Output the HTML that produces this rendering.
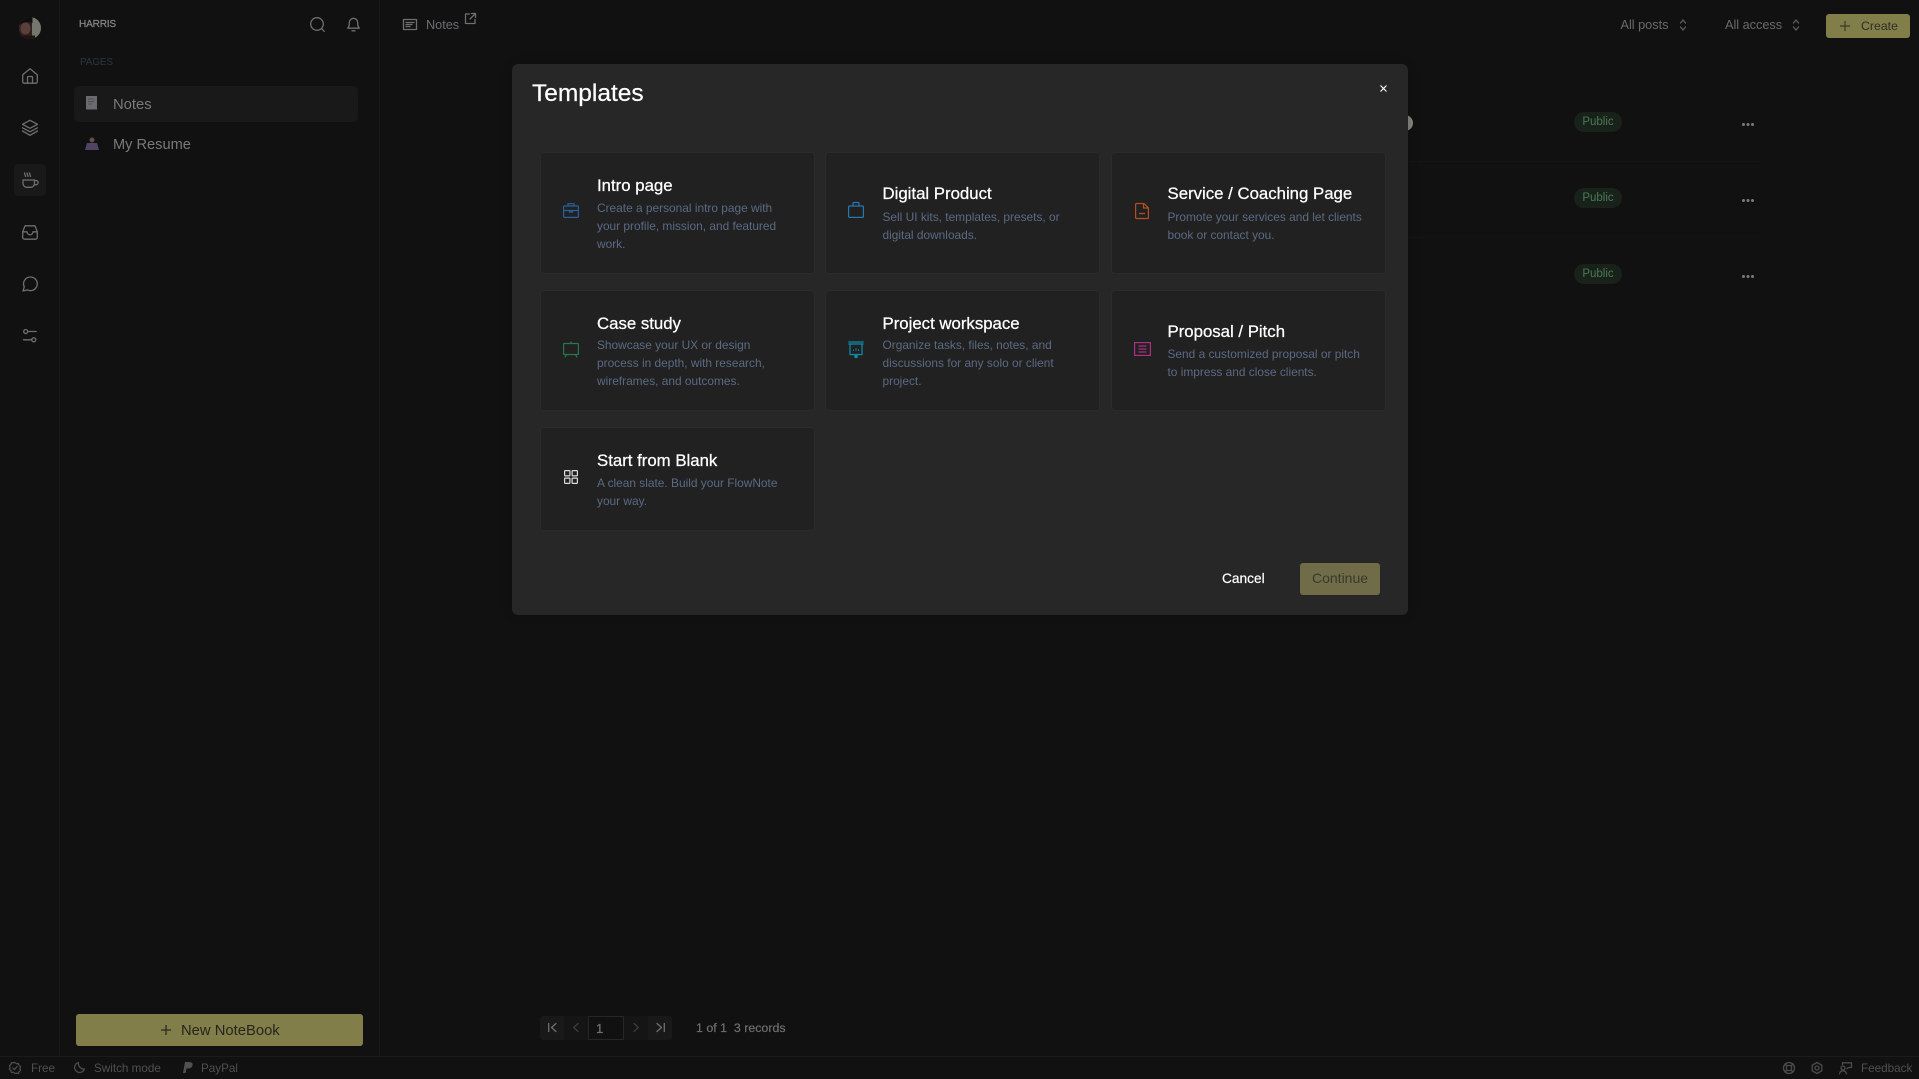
<!DOCTYPE html>
<html><head><meta charset="utf-8"><title>Templates</title>
<style>
*{box-sizing:border-box}
html,body{margin:0;padding:0;width:1919px;height:1079px;overflow:hidden;background:#111111;font-family:"Liberation Sans",sans-serif}
.a{position:absolute}
.t{position:absolute;white-space:nowrap;line-height:18px;height:18px}
svg{position:absolute;fill:none;overflow:visible}
.i{stroke:#6f6f6f;stroke-width:1.3;stroke-linecap:round;stroke-linejoin:round}
.card{position:absolute;background:#212121;border:1px solid #2b2b2b;border-radius:4px}
.h{color:#fff;font-size:16.8px;-webkit-text-stroke:.25px #fff}
.d{color:#5b6a84;font-size:11.9px}
.pub{position:absolute;left:1574px;width:48px;height:20px;border-radius:10px;background:#19211b;color:#4a7a55;font-size:11.5px;line-height:20px;text-align:center}
.dots{position:absolute;left:1742px;width:12px;height:3px;background:radial-gradient(circle at 1.5px 1.5px,#777 1.4px,transparent 1.6px) 0 0/4.5px 3px repeat-x}
.f{color:#505050;font-size:11.7px}
</style></head><body>

<div class="a" style="left:59px;top:0;width:1px;height:1056px;background:#191919"></div>
<div class="a" style="left:379px;top:0;width:1px;height:1056px;background:#191919"></div>
<div class="a" style="left:0;top:1056px;width:1919px;height:1px;background:#1b1b1b"></div>

<!-- avatar -->
<svg style="left:19px;top:17px" width="22" height="22" viewBox="0 0 22 22">
<defs><clipPath id="av"><circle cx="11" cy="11" r="11"/></clipPath></defs>
<g clip-path="url(#av)"><rect width="22" height="22" fill="#75776f"/><rect width="13" height="22" fill="#2e2220"/><ellipse cx="6.500" cy="11.500" rx="5" ry="6" fill="#5b3f39"/><path d="M0 0h13.500v6C9 4 4 5 0 8z" fill="#0f0f0f"/><path d="M0 18.500h16V22H0z" fill="#241210"/></g></svg>

<!-- rail -->
<div class="a" style="left:14px;top:164px;width:32px;height:32px;border-radius:4px;background:#191919"></div>
<svg class="i" style="left:22px;top:68px" width="16" height="16" viewBox="0 0 16 16"><path d="M.7 6.800 8 .8l7.300 6v7a1.400 1.400 0 0 1-1.400 1.400H2.100A1.400 1.400 0 0 1 .7 13.800z"/><path d="M5.500 15.200V9.500a1 1 0 0 1 1-1h3a1 1 0 0 1 1 1v5.700"/></svg>
<svg class="i" style="left:22px;top:120px" width="16" height="16" viewBox="0 0 16 16"><path d="M8 .3.5 4.300 8 8.300l7.500-4z"/><path d="M.5 7.800 8 11.800l7.500-4M.5 11 8 15.300l7.500-4.300"/></svg>
<svg class="i" style="left:22px;top:172px" width="17" height="16" viewBox="0 0 17 16" stroke-width="1.100"><path d="M1 8h11.500v3.500A3.800 3.800 0 0 1 8.700 15.300H4.800A3.800 3.800 0 0 1 1 11.500z"/><path d="M12.500 8.500h1.500a2 2 0 0 1 0 4.200h-1.600M2.500 1l1 3.500M5 1l1 3.500M7.500 1l1 3.500"/></svg>
<svg class="i" style="left:22px;top:225px" width="16" height="15" viewBox="0 0 16 15"><path d="M3 .8h10l2.300 6v5.500a1.900 1.900 0 0 1-1.900 1.900H2.600a1.900 1.900 0 0 1-1.900-1.900V6.800z"/><path d="M.8 6.800h4.200a3 3 0 0 0 6 0h4.200"/></svg>
<svg class="i" style="left:22px;top:276px" width="16" height="16" viewBox="0 0 16 16"><path d="M8.500 1a6.800 6.800 0 0 1 0 13.600 7 7 0 0 1-3-.7L1 15l1.300-4.100A6.800 6.800 0 0 1 8.500 1z"/></svg>
<svg class="i" style="left:23px;top:329px" width="14" height="14" viewBox="0 0 14 14"><circle cx="2.700" cy="2.500" r="2"/><circle cx="10.800" cy="10.800" r="2"/><path d="M4.700 2.500h8.500M.5 10.800h8.300"/></svg>

<!-- sidebar -->
<span class="t" style="left:79px;top:16px;color:#8a8a8a;font-size:10.100px;-webkit-text-stroke:.2px #8a8a8a;letter-spacing:-.2px">HARRIS</span>
<svg class="i" style="left:310px;top:17px" width="15" height="15" viewBox="0 0 15 15" stroke-width="1.100"><circle cx="7" cy="7" r="6.300"/><path d="m11.600 11.700 2.700 2.700"/></svg>
<svg class="i" style="left:347px;top:17px" width="13" height="15" viewBox="0 0 13 15" stroke-width="1.100"><path d="M.7 11.200h11.600c-1-1-1.600-2-1.600-4.200V5.500a4.200 4.200 0 0 0-8.400 0V7c0 2.200-.6 3.200-1.600 4.200zM5 13.800h3"/></svg>
<span class="t" style="left:80px;top:54px;color:#2c3442;font-size:9.800px">PAGES</span>
<div class="a" style="left:74px;top:86px;width:284px;height:36px;border-radius:4px;background:#191919"></div>
<svg style="left:86px;top:96px" width="12" height="14" viewBox="0 0 12 14"><path d="M0 0h11v13.500H0z" fill="#6b6a6e"/><path d="M2 3h6M2 5.500h6M2 8h4" stroke="#4f4e53"/></svg>
<span class="t" style="left:113px;top:96px;color:#7a7a7a;font-size:14.800px">Notes</span>
<svg style="left:85px;top:137px" width="14" height="13" viewBox="0 0 14 13"><circle cx="7" cy="3" r="2.500" fill="#5f5048"/><path d="M2 6h10l2 7H0z" fill="#4f4562"/></svg>
<span class="t" style="left:113px;top:136px;color:#7a7a7a;font-size:14.600px">My Resume</span>
<div class="a" style="left:76px;top:1014px;width:287px;height:32px;border-radius:3px;background:#827e49"></div>
<svg style="left:161px;top:1025px;stroke:#2a2a22;stroke-width:1.300" width="10" height="10" viewBox="0 0 10 10"><path d="M5 0v10M0 5h10"/></svg>
<span class="t" style="left:181px;top:1022px;color:#25251e;font-size:14.800px">New NoteBook</span>

<!-- top bar -->
<svg class="i" style="left:403px;top:19px" width="14" height="11" viewBox="0 0 14 11" stroke-width="1" stroke-linecap="butt" stroke-linejoin="miter"><rect x=".5" y=".5" width="13" height="10"/><path d="M3 3.500h8M3 5.500h6M3 7.500h4"/></svg>
<span class="t" style="left:426px;top:16px;color:#6a6c74;font-size:12.700px">Notes</span>
<svg class="i" style="left:465px;top:13px" width="11" height="11" viewBox="0 0 11 11" stroke-width="1" stroke-linecap="butt" stroke-linejoin="miter"><path d="M4.500 1H.5v9.500H10V6.500M6.500.5H10.500V4.500M10.300.7 5 6"/></svg>

<span class="t" style="left:1620.500px;top:16px;color:#6a6a6a;font-size:12.700px">All posts</span>
<svg class="i" style="left:1680px;top:19px;stroke:#5f5f5f" width="6" height="12" viewBox="0 0 6 12" stroke-width="1"><path d="M.5 4 3 1l2.500 3M.5 8 3 11l2.500-3"/></svg>
<span class="t" style="left:1725px;top:16px;color:#6a6a6a;font-size:12.700px">All access</span>
<svg class="i" style="left:1793px;top:19px;stroke:#5f5f5f" width="6" height="12" viewBox="0 0 6 12" stroke-width="1"><path d="M.5 4 3 1l2.500 3M.5 8 3 11l2.500-3"/></svg>
<div class="a" style="left:1826px;top:14px;width:84px;height:24px;border-radius:3px;background:#827e49"></div>
<svg style="left:1840px;top:21px;stroke:#3a3a2c;stroke-width:1.200" width="10" height="10" viewBox="0 0 10 10"><path d="M5 0v10M0 5h10"/></svg>
<span class="t" style="left:1861px;top:17px;color:#2e2e26;font-size:12.300px">Create</span>

<!-- list background -->
<div class="pub" style="top:112px">Public</div>
<div class="pub" style="top:188px">Public</div>
<div class="pub" style="top:264px">Public</div>
<div class="dots" style="top:122.500px"></div>
<div class="dots" style="top:198.500px"></div>
<div class="dots" style="top:274.500px"></div>
<div class="a" style="left:1408px;top:161px;width:352px;height:1px;background:#141414"></div>
<div class="a" style="left:1408px;top:237px;width:352px;height:1px;background:#141414"></div>
<div class="a" style="left:1397px;top:115px;width:16px;height:16px;border-radius:50%;background:#85857d"></div>

<!-- pagination -->
<div class="a" style="left:540px;top:1016px;width:24px;height:24px;background:#191919;border-radius:3px 0 0 3px"></div>
<div class="a" style="left:564px;top:1016px;width:24px;height:24px;background:#151515"></div>
<div class="a" style="left:588px;top:1016px;width:36px;height:24px;border:1px solid #262626"></div>
<div class="a" style="left:624px;top:1016px;width:24px;height:24px;background:#151515"></div>
<div class="a" style="left:648px;top:1016px;width:24px;height:24px;background:#191919;border-radius:0 3px 3px 0"></div>
<svg class="i" style="left:548px;top:1023px" width="9" height="9" viewBox="0 0 9 9" stroke-width="1.100"><path d="M.7.5v8M8 .5 3.500 4.500 8 8.500"/></svg>
<svg class="i" style="left:573px;top:1023px;stroke:#3c3c3c" width="6" height="9" viewBox="0 0 6 9" stroke-width="1.100"><path d="M5 .5.800 4.500 5 8.500"/></svg>
<span class="t" style="left:596px;top:1020px;color:#6f6f6f;font-size:13px;-webkit-text-stroke:.3px #6f6f6f">1</span>
<svg class="i" style="left:633px;top:1023px;stroke:#3c3c3c" width="6" height="9" viewBox="0 0 6 9" stroke-width="1.100"><path d="M1 .5l4.200 4L1 8.500"/></svg>
<svg class="i" style="left:656px;top:1023px" width="9" height="9" viewBox="0 0 9 9" stroke-width="1.100"><path d="M8.300.5v8M1 .5l4.500 4L1 8.500"/></svg>
<span class="t" style="left:696px;top:1019px;color:#6f6f6f;font-size:12.400px;-webkit-text-stroke:.2px #6f6f6f">1 of 1&nbsp; 3 records</span>

<!-- footer -->
<svg class="i" style="left:9px;top:1062px;stroke:#4c4c4c" width="12" height="12" viewBox="0 0 12 12" stroke-width="1"><path d="M6 .5 7.500 1.700 9.500 1.600l.6 1.900 1.500 1.200L11 6.500l.6 1.800-1.500 1.200-.6 1.900-2-.1L6 11.500 4.500 10.300l-2 .1-.6-1.900L.4 7.300 1 5.500.4 3.700 1.900 2.500l.6-1.900 2 .1z"/><path d="m3.800 6 1.600 1.600 2.800-3"/></svg>
<span class="t f" style="left:31px;top:1059.500px">Free</span>
<svg class="i" style="left:74px;top:1062px;stroke:#4c4c4c" width="11" height="11" viewBox="0 0 11 11" stroke-width="1.100"><path d="M4.500.6A5 5 0 1 0 10.400 7 5.500 5.500 0 0 1 4.500.6z"/></svg>
<span class="t f" style="left:94px;top:1059.500px">Switch mode</span>
<svg style="left:183px;top:1062px" width="10" height="12" viewBox="0 0 10 12"><path d="M2 0h4c3 0 4 1.500 3.500 3.500S7 6.500 5 6.500H3.500L2.600 11H0z" fill="#505050"/></svg>
<span class="t f" style="left:201px;top:1059.500px">PayPal</span>
<svg class="i" style="left:1783px;top:1062px;stroke:#4c4c4c" width="12" height="12" viewBox="0 0 12 12" stroke-width="1"><circle cx="6" cy="6" r="5.500"/><rect x="3.500" y="3.500" width="5" height="5" rx="1"/><path d="M2 2l1.500 1.500M10 2 8.500 3.500M2 10l1.500-1.500M10 10 8.500 8.500"/></svg>
<svg class="i" style="left:1811px;top:1062px;stroke:#4c4c4c" width="12" height="12" viewBox="0 0 12 12" stroke-width="1"><path d="M6 .5l4.800 2.700v5.600L6 11.500 1.200 8.800V3.200z"/><circle cx="6" cy="6" r="2"/></svg>
<svg class="i" style="left:1839px;top:1062px;stroke:#4c4c4c" width="13" height="12" viewBox="0 0 13 12" stroke-width="1"><circle cx="4" cy="6" r="2"/><path d="M.5 11.800c.4-2 1.800-3 3.500-3s3 1 3.500 3M3.500 2.500V.8h9v4.700H9.500l-1.500 1.200"/></svg>
<span class="t f" style="left:1861px;top:1059.500px">Feedback</span>

<!-- modal -->
<div class="a" style="left:512px;top:64px;width:896px;height:551px;background:#272727;border-radius:6px;box-shadow:0 0 10px rgba(0,0,0,.2)"></div>
<span class="t" style="left:532px;top:85px;color:#fff;font-size:24.500px;-webkit-text-stroke:.2px #fff">Templates</span>
<svg style="left:1380px;top:85px;stroke:#fff;stroke-width:1.200" width="7" height="7" viewBox="0 0 7 7"><path d="M.5.500l6 6M6.500.500l-6 6"/></svg>

<div class="card" style="left:540px;top:152px;width:275px;height:122px"></div>
<div class="card" style="left:825px;top:152px;width:275px;height:122px"></div>
<div class="card" style="left:1111px;top:152px;width:275px;height:122px"></div>
<div class="card" style="left:540px;top:290px;width:275px;height:121px"></div>
<div class="card" style="left:825px;top:290px;width:275px;height:121px"></div>
<div class="card" style="left:1111px;top:290px;width:275px;height:121px"></div>
<div class="card" style="left:540px;top:427px;width:275px;height:104px"></div>

<!-- card 1 -->
<svg style="left:563px;top:203px;stroke:#2a5f9f;stroke-width:1.200" width="16" height="15" viewBox="0 0 16 15"><rect x=".6" y="3" width="14.800" height="11.400" rx="1"/><path d="M5 3V.7h6V3M.6 7.500h14.800M6.500 7.500h3v1.500h-3z"/></svg>
<span class="t h" style="left:597px;top:177px">Intro page</span>
<span class="t d" style="left:597px;top:199px">Create a personal intro page with</span>
<span class="t d" style="left:597px;top:217px">your profile, mission, and featured</span>
<span class="t d" style="left:597px;top:235px">work.</span>
<!-- card 2 -->
<svg style="left:848px;top:202px;stroke:#2777ae;stroke-width:1.200" width="16" height="16" viewBox="0 0 16 16"><rect x=".6" y="4" width="14.800" height="11.400" rx="1"/><path d="M5 4V1.500a1 1 0 0 1 1-1h4a1 1 0 0 1 1 1V4"/></svg>
<span class="t h" style="left:882.500px;top:185px">Digital Product</span>
<span class="t d" style="left:882.500px;top:208px">Sell UI kits, templates, presets, or</span>
<span class="t d" style="left:882.500px;top:226px">digital downloads.</span>
<!-- card 3 -->
<svg style="left:1135px;top:203px;stroke:#b4501f;stroke-width:1.200" width="14" height="16" viewBox="0 0 14 16"><path d="M.6 1.500a1 1 0 0 1 1-1h7.400l4.400 4.400V14.500a1 1 0 0 1-1 1H1.600a1 1 0 0 1-1-1zM8.500.7V5h4.800M4 10.500h6"/></svg>
<span class="t h" style="left:1167.500px;top:185px">Service / Coaching Page</span>
<span class="t d" style="left:1167.500px;top:208px">Promote your services and let clients</span>
<span class="t d" style="left:1167.500px;top:226px">book or contact you.</span>
<!-- card 4 -->
<svg style="left:563px;top:341px;stroke:#26774f;stroke-width:1.200" width="16" height="17" viewBox="0 0 16 17"><rect x=".6" y="2.500" width="14.800" height="11" rx=".6"/><path d="M8 2.500V.5M3.500 13.500 2 16.500M12.500 13.500l1.500 3"/></svg>
<span class="t h" style="left:597px;top:314.500px">Case study</span>
<span class="t d" style="left:597px;top:336px">Showcase your UX or design</span>
<span class="t d" style="left:597px;top:354px">process in depth, with research,</span>
<span class="t d" style="left:597px;top:372px">wireframes, and outcomes.</span>
<!-- card 5 -->
<svg style="left:848px;top:341px;stroke:#0f8ca8;stroke-width:1.200" width="16" height="18" viewBox="0 0 16 18"><path d="M.4 1h15.200M.4 3h15.200M2 3v10.500h12V3M8 13.500V17"/><circle cx="8" cy="15.500" r="1.200" fill="#0f8ca8"/><path d="M5.500 10V8.500M8 10V7M10.500 10V8" stroke-width=".8"/></svg>
<span class="t h" style="left:882.500px;top:314.500px">Project workspace</span>
<span class="t d" style="left:882.500px;top:336px">Organize tasks, files, notes, and</span>
<span class="t d" style="left:882.500px;top:354px">discussions for any solo or client</span>
<span class="t d" style="left:882.500px;top:372px">project.</span>
<!-- card 6 -->
<svg style="left:1134px;top:342px;stroke:#ac2f80;stroke-width:1.200" width="17" height="14" viewBox="0 0 17 14"><rect x=".6" y=".6" width="15.800" height="12.800"/><path d="M4.500 4h8M4.500 7h8M4.500 10h8"/></svg>
<span class="t h" style="left:1167.500px;top:323px">Proposal / Pitch</span>
<span class="t d" style="left:1167.500px;top:345px">Send a customized proposal or pitch</span>
<span class="t d" style="left:1167.500px;top:363px">to impress and close clients.</span>
<!-- card 7 -->
<svg style="left:564px;top:470px;stroke:#dcdcdc;stroke-width:1.200" width="14" height="14" viewBox="0 0 14 14"><rect x=".6" y=".6" width="5.300" height="5.300" rx=".6"/><rect x="8.100" y=".6" width="5.300" height="5.300" rx=".6"/><rect x=".6" y="8.100" width="5.300" height="5.300" rx=".6"/><rect x="8.100" y="8.100" width="5.300" height="5.300" rx=".6"/></svg>
<span class="t h" style="left:597px;top:451.500px">Start from Blank</span>
<span class="t d" style="left:597px;top:474px">A clean slate. Build your FlowNote</span>
<span class="t d" style="left:597px;top:492px">your way.</span>

<span class="t" style="left:1222px;top:569.500px;color:#fff;font-size:13.700px;-webkit-text-stroke:.2px #fff">Cancel</span>
<div class="a" style="left:1300px;top:563px;width:80px;height:32px;border-radius:3px;background:#6f6c47"></div>
<span class="t" style="left:1312px;top:569px;color:#39392f;font-size:14px">Continue</span>

</body></html>
